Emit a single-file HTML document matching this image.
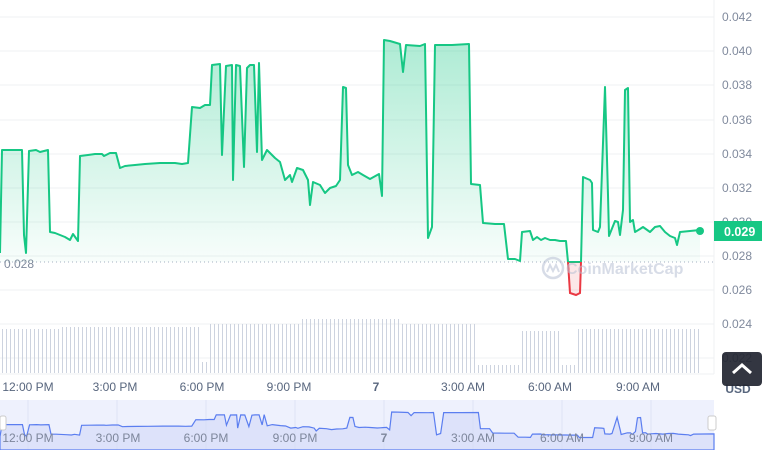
<!DOCTYPE html>
<html><head><meta charset="utf-8"><style>
body{margin:0;width:762px;height:450px;background:#fff;overflow:hidden;font-family:"Liberation Sans",sans-serif}
</style></head><body>
<svg width="762" height="450" viewBox="0 0 762 450" xmlns="http://www.w3.org/2000/svg" font-family="Liberation Sans, sans-serif">
<defs>
<linearGradient id="g" gradientUnits="userSpaceOnUse" x1="0" y1="40" x2="0" y2="262">
<stop offset="0" stop-color="#16c784" stop-opacity="0.35"/><stop offset="1" stop-color="#16c784" stop-opacity="0.03"/></linearGradient>
</defs>
<g stroke="#eff1f3" stroke-width="1">
<line x1="0" y1="17" x2="714" y2="17"/><line x1="0" y1="51" x2="714" y2="51"/><line x1="0" y1="85" x2="714" y2="85"/><line x1="0" y1="120" x2="714" y2="120"/><line x1="0" y1="154" x2="714" y2="154"/><line x1="0" y1="188" x2="714" y2="188"/><line x1="0" y1="222" x2="714" y2="222"/><line x1="0" y1="256" x2="714" y2="256"/><line x1="0" y1="290" x2="714" y2="290"/><line x1="0" y1="324" x2="714" y2="324"/><line x1="0" y1="358" x2="714" y2="358"/>
<line x1="714" y1="0" x2="714" y2="374"/>
</g>
<g fill="#808a9d" font-size="12">
<text x="722" y="21">0.042</text><text x="722" y="55">0.040</text><text x="722" y="89">0.038</text><text x="722" y="124">0.036</text><text x="722" y="158">0.034</text><text x="722" y="192">0.032</text><text x="722" y="226">0.030</text><text x="722" y="260">0.028</text><text x="722" y="294">0.026</text><text x="722" y="328">0.024</text><text x="722" y="362">0.022</text>
</g>
<g id="vb" stroke="#cdd3df" stroke-width="1"></g>
<line x1="0" y1="262" x2="714" y2="262" stroke="#a6b0c3" stroke-dasharray="1,3"/>
<text x="4" y="268" fill="#808a9d" font-size="12">0.028</text>
<path id="area" fill="url(#g)" d=""/>
<path id="line" fill="none" stroke="#16c784" stroke-width="2" stroke-linejoin="round" d=""/>
<path d="M568,262 L570,293 L576,295 L580,293 L581,262Z" fill="#ea3943" fill-opacity="0.12"/>
<path d="M568,262 L570,293 L576,295 L580,293 L581,262" fill="none" stroke="#ea3943" stroke-width="2"/>
<circle cx="700" cy="231" r="4" fill="#16c784"/>
<rect x="714" y="221" width="48" height="20" fill="#16c784"/>
<text x="724" y="236" fill="#fff" font-size="12.5" font-weight="bold">0.029</text>
<g opacity="0.55">
<circle cx="553" cy="268" r="10" fill="none" stroke="#b8c0d4" stroke-width="2.5"/>
<path d="M547,272 l3,-7 l3,6 l3,-6 l3,7" fill="none" stroke="#b8c0d4" stroke-width="2"/>
<text x="566" y="274" fill="#b8c0d4" font-size="16" font-weight="bold">CoinMarketCap</text>
</g>
<line x1="0" y1="374" x2="714" y2="374" stroke="#eff1f3"/>
<g fill="#58667e" font-size="12" text-anchor="middle">
<text x="28" y="391">12:00 PM</text><text x="115" y="391">3:00 PM</text><text x="202" y="391">6:00 PM</text><text x="289" y="391">9:00 PM</text><text x="376" y="391" font-weight="bold">7</text><text x="463" y="391">3:00 AM</text><text x="550" y="391">6:00 AM</text><text x="638" y="391">9:00 AM</text>
</g>
<text x="738" y="393" fill="#58667e" font-size="12" font-weight="bold" text-anchor="middle">USD</text>
<rect x="722" y="352" width="40" height="34" rx="4" fill="#222531" fill-opacity="0.92"/>
<path d="M733,373 l9,-8 l9,8" fill="none" stroke="#fff" stroke-width="3"/>
<rect x="0" y="400" width="714" height="50" fill="#eef1fd"/>
<g stroke="#dde3f5"><line x1="28" y1="400" x2="28" y2="450"/><line x1="117" y1="400" x2="117" y2="450"/><line x1="206" y1="400" x2="206" y2="450"/><line x1="295" y1="400" x2="295" y2="450"/><line x1="384" y1="400" x2="384" y2="450"/><line x1="473" y1="400" x2="473" y2="450"/><line x1="562" y1="400" x2="562" y2="450"/><line x1="651" y1="400" x2="651" y2="450"/></g>
<path id="nav" fill="#d5dcf8" fill-opacity="0.7" stroke="#5b7ef0" stroke-width="1.2" d=""/>
<g fill="#7d869b" font-size="12" text-anchor="middle">
<text x="28" y="442">12:00 PM</text><text x="118" y="442">3:00 PM</text><text x="206" y="442">6:00 PM</text><text x="295" y="442">9:00 PM</text><text x="384" y="442" font-weight="bold">7</text><text x="473" y="442">3:00 AM</text><text x="562" y="442">6:00 AM</text><text x="651" y="442">9:00 AM</text>
</g>
<rect x="0" y="416" width="6" height="14" rx="2" fill="#fff" stroke="#ccc"/>
<rect x="708" y="416" width="8" height="14" rx="2" fill="#fff" stroke="#ccc"/>
</svg>
<script>
var pts=[[0,253],[2,150],[22,150],[24,235],[26,253],[29,151],[36,150],[40,152],[48,150],[50,232],[55,233],[65,237],[70,240],[73,234],[78,241],[80,156],[88,155],[95,154],[102,154],[104,156],[110,153],[116,153],[120,168],[125,166],[135,165],[145,164],[160,163],[175,163],[182,164],[188,163],[192,107],[200,108],[205,105],[210,105],[212,65],[220,64],[222,155],[226,66],[232,65],[233,180],[236,65],[240,66],[244,167],[247,68],[250,65],[254,65],[257,152],[259,63],[262,160],[267,150],[275,158],[280,162],[285,180],[290,175],[292,182],[297,168],[303,170],[308,180],[310,205],[313,182],[320,185],[325,193],[330,188],[336,186],[340,180],[343,87],[346,88],[348,165],[352,175],[358,172],[363,175],[370,179],[379,174],[382,196],[384,40],[390,41],[400,44],[403,72],[406,45],[420,46],[425,44],[428,238],[432,227],[435,45],[445,45],[452,45],[469,44],[471,184],[480,185],[483,223],[495,224],[504,224],[508,259],[515,259],[520,261],[522,232],[530,231],[533,240],[537,237],[541,240],[545,238],[550,240],[555,240],[560,241],[566,241],[568,262],[581,262],[583,177],[590,180],[592,183],[593,230],[598,232],[600,227],[605,87],[608,195],[609,236],[615,221],[618,222],[620,235],[623,210],[625,90],[628,88],[630,222],[633,220],[635,232],[640,229],[643,227],[650,232],[655,227],[660,226],[665,232],[670,236],[675,238],[677,245],[680,232],[690,231],[700,230]];
var d="";pts.forEach(function(p,i){d+=(i?"L":"M")+p[0]+","+p[1]});
document.getElementById('line').setAttribute('d',d);
document.getElementById('area').setAttribute('d',d+"L700,262L0,262Z");
var nd="M0,450";pts.forEach(function(p){nd+="L"+p[0]*1.02+","+(412+(p[1]-40)*0.115).toFixed(1)});nd+="L714,436L714,450Z";
document.getElementById('nav').setAttribute('d',nd);
var g=document.getElementById('vb'),s="";
for(var x=2;x<700;x+=4){var t=328;if(x<60)t=329;else if(x<200)t=327;else if(x<210)t=362;else if(x<300)t=324;else if(x<400)t=319;else if(x<476)t=324;if(x>476&&x<520)t=365;if(x>560&&x<575)t=365;if(x>520&&x<560)t=331;if(x>575)t=329;
s+='<line x1="'+x+'.5" y1="'+t+'" x2="'+x+'.5" y2="373"/>';}
g.innerHTML=s;
</script>
</body></html>
